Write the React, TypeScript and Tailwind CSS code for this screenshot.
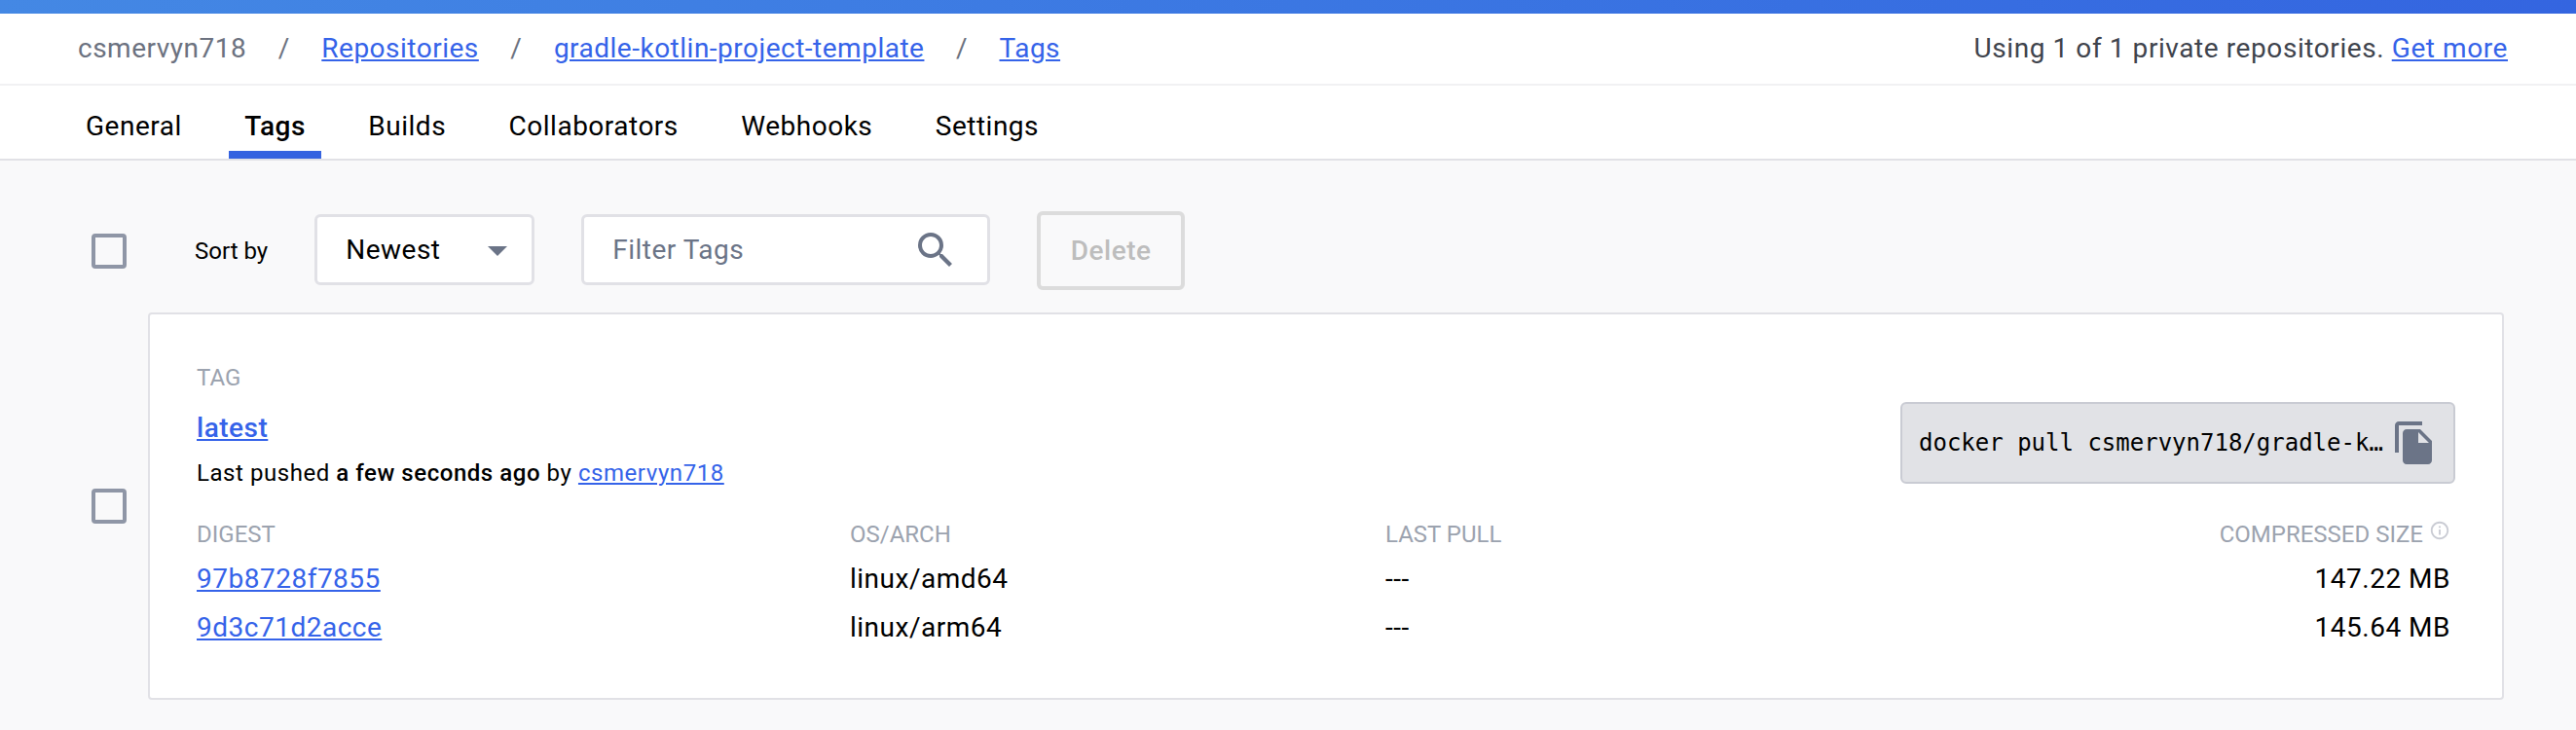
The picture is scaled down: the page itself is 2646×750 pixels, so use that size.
import { MdArrowDropDown, MdFileCopy, MdInfoOutline, MdSearch } from "react-icons/md";

const tabs = ["General", "Tags", "Builds", "Collaborators", "Webhooks", "Settings"];

const digests = [
  { id: "97b8728f7855", arch: "linux/amd64", size: "147.22 MB" },
  { id: "9d3c71d2acce", arch: "linux/arm64", size: "145.64 MB" },
];

const Checkbox = () => (
  <div className="h-[36px] w-[36px] shrink-0 rounded-[4px] border-[4px] border-[#8f96a6]"></div>
);

const Slash = () => <span className="mx-[32.5px] text-[#6c7280]">/</span>;

const App = () => {
  return (
    <div className="flex min-h-screen flex-col bg-[#f9f9fa] font-['Roboto',sans-serif] text-[28px] tracking-[0.5px] text-black">
      <div className="h-[14px] bg-gradient-to-r from-[#4488e4] to-[#3465e0]"></div>

      <div className="flex h-[74px] items-center justify-between border-b-2 border-[#f1f1f3] bg-white pl-[80px] pr-[70px]">
        <div className="flex items-center">
          <span className="text-[#6c7280]">csmervyn718</span>
          <Slash />
          <a className="text-[#3563e9] underline">Repositories</a>
          <Slash />
          <a className="text-[#3563e9] underline">gradle-kotlin-project-template</a>
          <Slash />
          <a className="text-[#3563e9] underline">Tags</a>
        </div>
        <div className="tracking-[0.58px] text-[#3f444d]">
          Using 1 of 1 private repositories. <a className="text-[#3563e9] underline">Get more</a>
        </div>
      </div>

      <div className="flex h-[77px] gap-[32.5px] border-b-2 border-[#e1e1e6] bg-white pl-[72px]">
        {tabs.map((tab) => (
          <div
            key={tab}
            className={
              tab === "Tags"
                ? "flex items-center border-b-[8px] border-[#3563e0] px-[16px] pt-[16px] font-medium"
                : "flex items-center border-b-[8px] border-transparent px-[16px] pt-[16px]"
            }
          >
            {tab}
          </div>
        ))}
      </div>

      <div className="mt-[52px] flex h-[81px] items-center pl-[94px]">
        <Checkbox />
        <span className="ml-[70px] text-[24px] tracking-normal">Sort by</span>
        <div className="mb-[2px] ml-[48px] flex h-[73px] w-[226px] items-center justify-between rounded-[6px] border-[3px] border-[#e1e1e6] bg-white pl-[29px] pr-[11px]">
          <span>Newest</span>
          <MdArrowDropDown className="text-[48px] text-[#6b7487]" />
        </div>
        <div className="mb-[2px] ml-[48px] flex h-[73px] w-[420px] items-center justify-between rounded-[6px] border-[3px] border-[#e1e1e6] bg-white pl-[29px] pr-[29px]">
          <span className="text-[#6b7487]">Filter Tags</span>
          <MdSearch className="text-[48px] text-[#6b7487]" />
        </div>
        <button className="ml-[48px] h-[81px] w-[152px] rounded-[6px] border-[4px] border-[#dcdcdc] font-medium text-[#bdbdbd]">
          Delete
        </button>
      </div>

      <div className="mt-[23px] flex items-center pl-[94px] pr-[74px]">
        <Checkbox />
        <div className="ml-[22px] flex-1 rounded-[4px] border-2 border-[#e1e1e6] bg-white pb-[47px] pl-[48px] pr-[48px] pt-[49px]">
          <div className="flex justify-between">
            <div>
              <div className="h-[32px] text-[24px] leading-[32px] tracking-normal text-[#9ca3af]">TAG</div>
              <a className="mt-[16px] block h-[40px] font-medium leading-[40px] text-[#3563e9] underline">latest</a>
              <div className="mt-[10px] h-[33px] text-[24px] leading-[32px] tracking-[0.55px]">
                Last pushed <span className="font-medium">a few seconds ago</span> by{" "}
                <a className="text-[#3563e9] underline">csmervyn718</a>
              </div>
            </div>
            <div className="mb-[6px] flex h-[84px] w-[570px] items-center self-end rounded-[6px] border-2 border-[#c9cbd3] bg-[#e1e2e6] pl-[17px]">
              <span className="w-[478px] truncate font-['DejaVu_Sans_Mono',monospace] text-[24px] tracking-normal">
                docker pull csmervyn718/gradle-kotlin-project-template:latest
              </span>
              <MdFileCopy className="ml-[7px] text-[48px] text-[#6b7487]" />
            </div>
          </div>

          <div className="mb-[6px] mt-[31px] grid h-[30px] grid-cols-[671px_550px_1fr] pr-[5px] text-[24px] leading-[30px] tracking-normal text-[#9ca3af]">
            <div>DIGEST</div>
            <div>OS/ARCH</div>
            <div className="flex items-center justify-between">
              <span>LAST PULL</span>
              <div className="flex items-center">
                <span>COMPRESSED SIZE</span>
                <MdInfoOutline className="mb-[8px] ml-[6px] text-[22px] text-[#c9cbd3]" />
              </div>
            </div>
          </div>
          {digests.map((row) => (
            <div key={row.id} className="grid h-[50px] grid-cols-[671px_550px_1fr] items-center pr-[5px]">
              <a className="text-[#3563e9] underline">{row.id}</a>
              <span>{row.arch}</span>
              <div className="flex justify-between">
                <span>---</span>
                <span>{row.size}</span>
              </div>
            </div>
          ))}
        </div>
      </div>
    </div>
  );
};

export default App;
